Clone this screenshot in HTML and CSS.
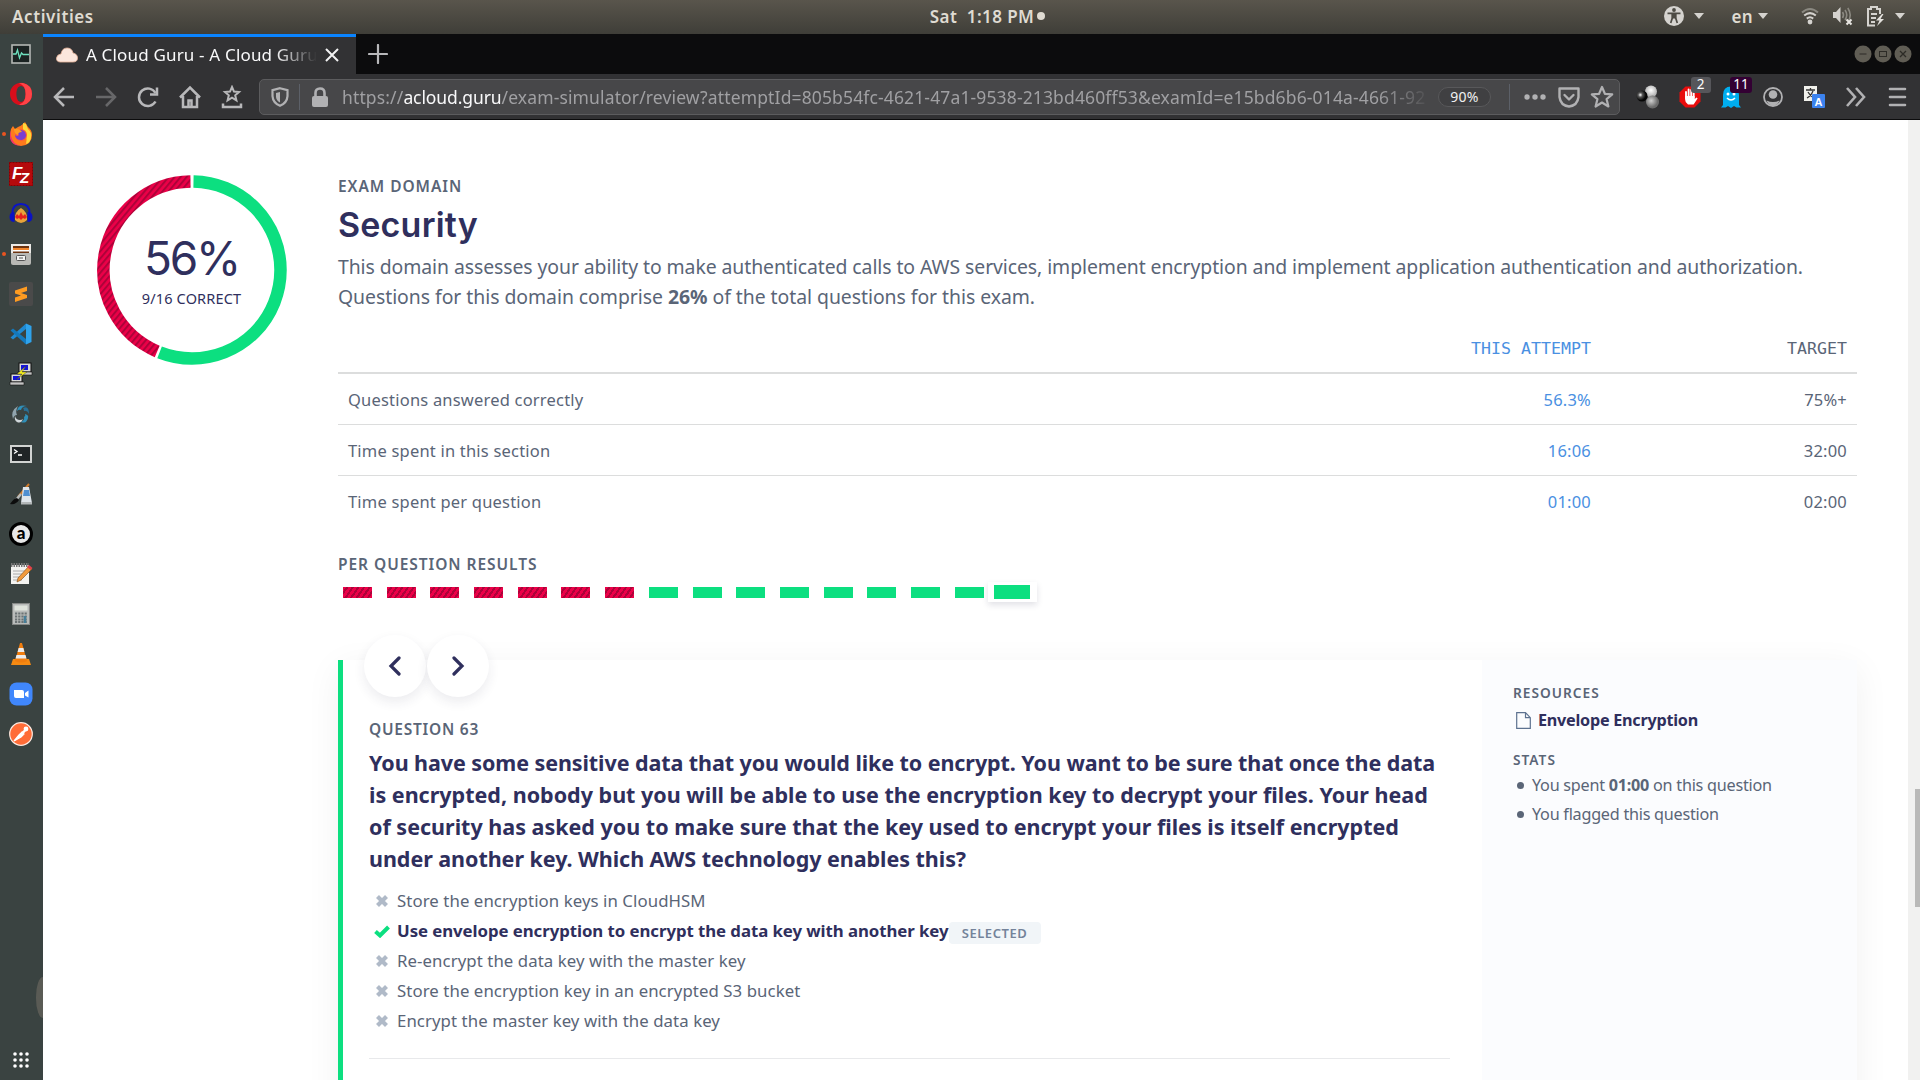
FILE: index.html
```html
<!DOCTYPE html>
<html lang="en">
<head>
<meta charset="utf-8">
<title>A Cloud Guru - A Cloud Guru</title>
<link rel="stylesheet" href="styles.css">
</head>
<body>
<header class="topbar">
  <span class="activities">Activities</span>
  <div class="clock"><span class="clock-text">Sat&nbsp; 1:18 PM</span><i class="clock-dot"></i></div>
  <div class="tray">
    <svg class="t-access" width="22" height="22" viewBox="0 0 22 22"><circle cx="11" cy="11" r="10" fill="#d5d3cf"/><circle cx="11" cy="5" r="1.900" fill="#4d4b44"/><path d="M4.500 8.300h13M9.300 8v5l-1.600 5M12.700 8v5l1.600 5" fill="none" stroke="#4d4b44" stroke-width="1.700"/><path d="M8.800 8h4.400v5.500H8.800z" fill="#4d4b44"/></svg>
    <i class="caret c1"></i>
    <span class="lang">en</span>
    <i class="caret c2"></i>
    <svg class="t-wifi" width="18" height="18" viewBox="0 0 18 18" fill="none" stroke="#d5d3cf" stroke-width="2"><path d="M1 5.500Q9-1.500 17 5.500" stroke="#8b8981"/><path d="M3.200 8.600Q9 3.600 14.800 8.600M5.800 11.600Q9 9 12.200 11.600"/><circle cx="9" cy="15" r="2.400" fill="#d5d3cf" stroke="none"/></svg>
    <svg class="t-vol" width="22" height="20" viewBox="0 0 22 20"><path d="M1 6h3l4.500-5v16L4 12H1z" fill="#d5d3cf"/><path d="M10.500 6q2 3 0 6M13 4q3.500 5 0 10M15.800 2q4.500 7 .5 13" fill="none" stroke="#8b8981" stroke-width="1.600"/><path d="M14.500 13.500l5 5m0-5l-5 5" stroke="#e8e6e2" stroke-width="2"/></svg>
    <svg class="t-bat" width="20" height="22" viewBox="0 0 20 22"><path d="M9 20.500H2V4h3V2h6v2h3v5" fill="none" stroke="#d5d3cf" stroke-width="2"/><path d="M5 9h6M5 13h5M5 17h4" stroke="#d5d3cf" stroke-width="2"/><path d="M16 9l-6 6.500h3.500L11 21l7-7h-3.500l3-5z" fill="#e3e1dd"/></svg>
    <i class="caret c3"></i>
  </div>
</header>
<div class="desktop">
<nav class="dock">
  <svg viewBox="0 0 24 24"><rect x="3" y="3" width="18" height="18" fill="#1b2322" stroke="#b4b7b4" stroke-width="1.600"/><path d="M4 12h3l1.500-4 2 8 2-5 1.500 1.500h6" fill="none" stroke="#6fe3c0" stroke-width="1.300"/></svg>
  <svg viewBox="0 0 24 24"><path fill-rule="evenodd" d="M12 .8c6.200 0 11 5 11 11.200s-4.800 11.200-11 11.200S1 18.200 1 12 5.800.8 12 .8zM12 4c-3 0-4.600 3.600-4.600 8s1.600 8 4.600 8 4.600-3.600 4.600-8S15 4 12 4z" fill="#d80e1b"/><path d="M14 1q9 2 9 11t-9 11q-2 .3-4-.5 6.600-1.500 6.600-10.500T10 1.500q2-.8 4-.5z" fill="#ff4347"/></svg>
  <div class="running"><svg viewBox="0 0 24 24"><path d="M2 7l2-3 2 3 3-2q3-1 5-3l2-2 3 5q4 3 4 8 0 10-11 11Q1 23 1 13z" fill="#ff7a1c"/><path d="M14 1l3 1 2 5q4 3 3 9-1 5-5 6 2-9-3-12z" fill="#ffd83a"/><path d="M2 14q2 9 10 9.500Q5 24 2 19 0 15 2 8z" fill="#f5336b"/><circle cx="12" cy="13" r="6" fill="#ff5a3a"/><path d="M8 10q4-4 8 0 3 6-3 8-7 0-7-5 2 2 4 0z" fill="#7a3fd0"/><path d="M5 7q5-1 8 3-4 0-4 3-4-1-4-6z" fill="#ff9a20"/></svg></div>
  <svg viewBox="0 0 24 24"><rect width="24" height="24" fill="#b40a0c"/><rect x=".5" y=".5" width="23" height="23" fill="none" stroke="#7f0305" stroke-dasharray="2 1"/><text x="3" y="17" class="fz">F</text><text x="11" y="21" class="fz fz-z">Z</text></svg>
  <svg viewBox="0 0 24 24"><path d="M6 18q-1-8 6-12 7 4 6 12-6 6-12 0z" fill="#e9a43a"/><path d="M6 15l2-3 2 2 2-4 2 4 2-2 2 3-2 2-2-1-2 2-2-2-2 1z" fill="#e52320"/><path d="M3.500 14V11q0-9 8.500-9t8.500 9v3" fill="none" stroke="#0a14c8" stroke-width="2"/><path d="M5.500 10v10Q.5 20 .5 15t5-5zM18.500 10v10q5 0 5-5t-5-5z" fill="#0b12c4"/></svg>
  <div class="running"><svg viewBox="0 0 24 24"><rect x="2" y="2" width="20" height="10" fill="#eceae6"/><rect x="4" y="4" width="16" height="8" fill="#6d3410"/><path d="M4 6h16v3H4z" fill="#f1862d"/><path d="M4 8h16v1.500H4z" fill="#fff"/><path d="M2 11h20v10q0 2-2 2H4q-2 0-2-2z" fill="#b9b9b5"/><rect x="7.500" y="13.500" width="9" height="5" rx="1" fill="#f4f4f2" stroke="#555"/><path d="M10 16h4" stroke="#555"/></svg></div>
  <svg viewBox="0 0 24 24"><rect width="24" height="24" rx="2" fill="#4a4a4a"/><path d="M6 8.500L18 4.500V9l-6 2 6 2v3L6 20v-4.500l6-2-6-2z" fill="#ff9b21"/></svg>
  <svg viewBox="0 0 24 24"><path d="M17 1.500V7L4 17.500l-2.500-2z" fill="#1f8ad2"/><path d="M17 22.500V17L4 6.500l-2.500 2z" fill="#1479bd"/><path d="M17 1.500l5.500 2.500v16L17 22.500z" fill="#2fa3ec"/></svg>
  <svg viewBox="0 0 24 24"><rect x="10" y="1" width="12" height="9" fill="#d8d8d8" stroke="#111"/><rect x="12" y="3" width="7" height="5" fill="#1414d8"/><path d="M9 10h14v3H9z" fill="#c4c4c4" stroke="#111" stroke-width=".6"/><rect x="2" y="12" width="11" height="8" fill="#d8d8d8" stroke="#111"/><rect x="4" y="14" width="7" height="4" fill="#1414d8"/><path d="M1 20h14v3H1z" fill="#c4c4c4" stroke="#111" stroke-width=".6"/><path d="M17 4l-9 8h5l-6 6 11-8h-5z" fill="#f6ef1c" stroke="#333" stroke-width=".4"/></svg>
  <svg viewBox="0 0 24 24"><path d="M4 17Q1 9 9 4q-3 5-1 9-3 0-4 4z" fill="#90a4ad"/><path d="M8 9q1-7 10-5-5 0-6 4-2-1-4 1z" fill="#2f8fb8"/><path d="M14 6q6-3 6 6-2-4-5-3 0-2-1-3z" fill="#2a6f95"/><path d="M16 12q6 1 1 8-3 1-5 0 4-2 3-5 2-1 1-3z" fill="#2f8fb8"/><path d="M6 14q1 4 5 4 2 0 3-1-2 5-6 3-3-2-2-6z" fill="#cfd6d9"/></svg>
  <svg viewBox="0 0 24 24"><rect x="2" y="4" width="20" height="16" fill="#202426" stroke="#d2d4d2" stroke-width="2"/><path d="M5 7.500l3 2-3 2M9 13h4" fill="none" stroke="#fff" stroke-width="1.300"/></svg>
  <svg viewBox="0 0 24 24"><path d="M20 2L9 15" stroke="#d07a2a" stroke-width="2"/><path d="M12 12l-5 6" stroke="#b8bcbc" stroke-width="2.500"/><path d="M8 16q-3 0-7 6 6 1 9-4z" fill="#0c0c0c"/><path d="M14 5h6l3 16H12z" fill="#dfe5ea"/><path d="M15 8h5l1 6h-7z" fill="#4f8fd0"/><path d="M12 20h11v2.500H12z" fill="#b3b7b8"/></svg>
  <svg viewBox="0 0 24 24"><circle cx="12" cy="12" r="10.500" fill="#e8e8e8" stroke="#000" stroke-width="3"/><text x="12" y="17" class="a-mark">a</text></svg>
  <svg viewBox="0 0 24 24"><rect x="2" y="3" width="18" height="19" fill="#f3f3f0"/><path d="M2 3h18" stroke="#777" stroke-width="4" stroke-dasharray="1.500 1"/><path d="M4 9h13M4 12h13M4 15h11M4 18h9" stroke="#aaa"/><path d="M20 4l3 3L12 18l-4 2 1-4z" fill="#f09a3c" stroke="#7d4a15" stroke-width=".6"/><path d="M20 3l3.500 3-2 2L18 5z" fill="#e3404a"/></svg>
  <svg viewBox="0 0 24 24"><rect x="3.500" y="1.500" width="17" height="21" fill="#b9bcba" stroke="#858886"/><rect x="5.500" y="3.500" width="13" height="5" fill="#dfe4dc"/><path d="M6 11.500h12M6 14.500h12M6 17.500h12M6 20h12" stroke="#6c7374" stroke-width="1.800" stroke-dasharray="2.200 1"/><path d="M16 14v7" stroke="#477f99" stroke-width="2.500"/></svg>
  <svg viewBox="0 0 24 24"><path d="M4 17h16l2 6H2z" fill="#f58a12"/><path d="M11 1h2l5 18q-6 3-12 0z" fill="#f07d0e"/><path d="M9.600 6h4.800l1 4H8.600zM7.500 13h9l1 3.500H6.500z" fill="#ececec"/></svg>
  <svg viewBox="0 0 24 24"><rect x=".5" y=".5" width="23" height="23" rx="7" fill="#4087fc"/><path d="M5 8h8q2 0 2 2v6H7q-2 0-2-2zM16 11l3.500-2.500v7L16 13.500z" fill="#fff"/></svg>
  <svg viewBox="0 0 24 24"><circle cx="12" cy="12" r="11.300" fill="#ff6c37" stroke="#fde9e0" stroke-width="1.200"/><path d="M5 19l5-6 3-3 2 2-3 3z" fill="#fff" stroke="#fff" stroke-width="1.200"/><path d="M12.500 10l3-2.500 1.500 1.500-2.500 3z" fill="#fff"/><circle cx="17" cy="7" r="2.400" fill="#fff"/></svg>
  <i class="dock-handle"></i>
  <svg class="apps" viewBox="0 0 24 24" fill="#fff"><circle cx="6" cy="6" r="1.800"/><circle cx="12" cy="6" r="1.800"/><circle cx="18" cy="6" r="1.800"/><circle cx="6" cy="12" r="1.800"/><circle cx="12" cy="12" r="1.800"/><circle cx="18" cy="12" r="1.800"/><circle cx="6" cy="18" r="1.800"/><circle cx="12" cy="18" r="1.800"/><circle cx="18" cy="18" r="1.800"/></svg>
</nav>
<div class="browser">
  <div class="tabs">
    <div class="tab">
      <svg class="favicon" width="22" height="16" viewBox="0 0 22 16"><path d="M4 15q-4-.5-3.500-4T5 7Q6 1 11 1t6 5q4.500 1 4.500 5T17 15z" fill="#fbe6dc" stroke="#e9b49a" stroke-width=".8"/></svg>
      <span class="tab-title">A Cloud Guru - A Cloud Guru</span>
      <svg class="tab-close" width="14" height="14" viewBox="0 0 14 14"><path d="M1 1l12 12M13 1L1 13" stroke="#f2f2f3" stroke-width="2"/></svg>
    </div>
    <svg class="newtab" width="20" height="20" viewBox="0 0 20 20"><path d="M10 1v18M1 10h18" stroke="#b8b8ba" stroke-width="2.200" stroke-linecap="round"/></svg>
    <div class="winbtns">
      <svg viewBox="0 0 18 18"><circle cx="9" cy="9" r="8.500" fill="#605d54"/><path d="M5.500 9h7" stroke="#2c2b26"/></svg>
      <svg viewBox="0 0 18 18"><circle cx="9" cy="9" r="8.500" fill="#605d54"/><rect x="5.500" y="6.500" width="7" height="5" fill="none" stroke="#2c2b26"/></svg>
      <svg viewBox="0 0 18 18"><circle cx="9" cy="9" r="8.500" fill="#605d54"/><path d="M6 6l6 6m0-6l-6 6" stroke="#2c2b26" stroke-width="1.300"/></svg>
    </div>
  </div>
  <div class="toolbar">
    <div class="navicons">
      <svg viewBox="0 0 24 24"><path d="M22 12H3M12 3l-9 9 9 9"/></svg>
      <svg class="off" viewBox="0 0 24 24"><path d="M2 12h19M12 3l9 9-9 9"/></svg>
      <svg viewBox="0 0 24 24"><path d="M19.500 16.500A8.800 8.800 0 1 1 19.500 8"/><path d="M21 2.500v7h-7"/></svg>
      <svg viewBox="0 0 24 24"><path d="M2 12.500L12 2.500l10 10M5 11v11h14V11"/><path d="M10.500 22v-6.500h3V22"/></svg>
      <svg viewBox="0 0 24 24"><path d="M12 2l2 4.600 5 .4-3.800 3.300 1.200 5-4.400-2.700-4.400 2.700 1.200-5L5 7l5-.4z" stroke-width="2"/><path d="M3 18.500v3.500h18v-3.500"/></svg>
    </div>
    <div class="urlbar">
      <svg class="u-shield" width="18" height="20" viewBox="0 0 18 20"><path d="M9 1.200l7.500 2v6Q16 16 9 18.800 2 16 1.500 9.200v-6z" fill="none" stroke="#b1b1b3" stroke-width="2.200"/><path d="M9 5l-4 1v4q.4 3.600 4 5.500z" fill="#b1b1b3"/></svg>
      <i class="vsep"></i>
      <svg class="u-lock" width="18" height="20" viewBox="0 0 18 20"><rect x="1" y="9" width="16" height="11" rx="2" fill="#b1b1b3"/><path d="M4.500 10V6q0-4.500 4.500-4.500T13.500 6v4" fill="none" stroke="#b1b1b3" stroke-width="2.600"/></svg>
      <span class="url">https://<b>acloud.guru</b>/exam-simulator/review?attemptId=805b54fc-4621-47a1-9538-213bd460ff53&amp;examId=e15bd6b6-014a-4661-92</span>
      <span class="zoom">90%</span>
      <i class="vsep v2"></i>
      <svg class="u-dots" width="24" height="24" viewBox="0 0 24 24" fill="#b1b1b3"><circle cx="4" cy="12" r="2.700"/><circle cx="12" cy="12" r="2.700"/><circle cx="20" cy="12" r="2.700"/></svg>
      <svg class="u-pocket" width="24" height="24" viewBox="0 0 24 24" fill="none" stroke="#b1b1b3" stroke-width="2.400" stroke-linejoin="round" stroke-linecap="round"><path d="M2.500 3.500h19V12q-1 8.500-9.500 9.500Q3.500 20.500 2.500 12z"/><path d="M7.500 10l4.500 4.500L16.500 10"/></svg>
      <svg class="u-star" width="24" height="24" viewBox="0 0 24 24" fill="none" stroke="#b1b1b3" stroke-width="2.200" stroke-linejoin="round"><path d="M12 2l2.900 6.800 7.300.6-5.600 4.800 1.800 7.300L12 17.500l-6.400 4 1.800-7.300-5.600-4.800 7.300-.6z"/></svg>
    </div>
    <div class="exts">
      <svg viewBox="0 0 24 24"><defs><radialGradient id="g1" cx=".35" cy=".4"><stop offset="0" stop-color="#fff"/><stop offset=".4" stop-color="#555"/><stop offset="1" stop-color="#050505"/></radialGradient><radialGradient id="g2" cx=".5" cy=".4"><stop offset="0" stop-color="#fff"/><stop offset="1" stop-color="#b5b5b5"/></radialGradient><radialGradient id="g3" cx=".4" cy=".4"><stop offset="0" stop-color="#d0d0d0"/><stop offset="1" stop-color="#6b6b6b"/></radialGradient></defs><circle cx="15" cy="6.500" r="6" fill="url(#g2)"/><circle cx="6" cy="11" r="5.500" fill="url(#g1)"/><circle cx="16.500" cy="17" r="6.500" fill="url(#g3)"/></svg>
      <div class="ext"><svg viewBox="0 0 24 24"><path d="M7.500 1.500h9l6 6v9l-6 6h-9l-6-6v-9z" fill="#e80c0c"/><path d="M8 7v6M10.600 4.500V12M13.200 5v7M15.700 7v6" stroke="#fff" stroke-width="1.900" stroke-linecap="round"/><path d="M7.100 11h9.500v3l2-1.500 1 1-4 6H10q-3-2-2.900-5z" fill="#fff"/></svg><span class="badge">2</span></div>
      <div class="ext"><svg viewBox="0 0 24 24"><path d="M4 20V10q0-8.500 8-8.500T20 10v10l2 2.500h-4.500L15 21l-3 2-3-2-2.500 1.500H2z" fill="#00aef0"/><circle cx="9" cy="9" r="1.500" fill="#fff"/><circle cx="15" cy="9" r="1.500" fill="#fff"/><path d="M8 13q4 4 8 0" fill="none" stroke="#fff" stroke-width="1.600"/></svg><span class="badge purple">11</span></div>
      <svg viewBox="0 0 24 24"><circle cx="12" cy="12" r="9" fill="none" stroke="#b1b1b3" stroke-width="1.800"/><circle cx="12" cy="9.500" r="4.300" fill="#b1b1b3"/><path d="M5.500 15.500q6.500 3 13 0-2 5-6.500 5t-6.500-5z" fill="#b1b1b3"/></svg>
      <svg viewBox="0 0 24 24"><rect x="2" y="1" width="13" height="15" fill="#f1f1ec"/><path d="M4 5h9M8.500 3v2M11 6q-2 5-6 7M6 7q2 4 6 6" fill="none" stroke="#333" stroke-width="1.300"/><rect x="10" y="9" width="13" height="14" rx="1" fill="#3b82ee"/><text x="16.500" y="20.500" class="tr">A</text></svg>
      <svg viewBox="0 0 24 24" fill="none" stroke="#b1b1b3" stroke-width="2.600"><path d="M3 3l8 9-8 9M12 3l8 9-8 9"/></svg>
      <svg viewBox="0 0 24 24" stroke="#b1b1b3" stroke-width="2.600" stroke-linecap="round"><path d="M5 4h15M5 12h15M5 20h15"/></svg>
    </div>
  </div>
  <div class="viewport">
    <main class="page">
      <aside class="score">
        <div class="donut">
          <svg width="190" height="190" viewBox="0 0 190 190">
            <defs><pattern id="stripes" width="4.600" height="4.600" patternUnits="userSpaceOnUse" patternTransform="rotate(40)"><rect width="4.600" height="4.600" fill="#ec0048"/><rect width="2" height="4.600" fill="#ad0339"/></pattern></defs>
            <g fill="none" stroke-width="12.500" transform="rotate(-90 95 95)"><circle cx="95" cy="95" r="88.500" stroke="#0cdf80" pathLength="360" stroke-dasharray="200.500 159.500" stroke-dashoffset="-1"/></g>
            <path d="M60.200 176.400A88.500 88.500 0 0 1 93.500 6.500" fill="none" stroke="url(#stripes)" stroke-width="12.500"/>
          </svg>
          <div class="donut-label"><span class="pct">56%</span><span class="frac">9/16 CORRECT</span></div>
        </div>
      </aside>
      <section class="domain">
        <h4 class="eyebrow">EXAM DOMAIN</h4>
        <h1 class="title">Security</h1>
        <p class="desc"><span>This domain assesses your ability to make authenticated calls to AWS services, implement encryption and implement application authentication and authorization.</span><br><span class="desc-2">Questions for this domain comprise <b>26%</b> of the total questions for this exam.</span></p>
        <div class="stats">
          <div class="row head"><span></span><span class="blue">THIS ATTEMPT</span><span>TARGET</span></div>
          <div class="row"><span>Questions answered correctly</span><span class="blue">56.3%</span><span>75%+</span></div>
          <div class="row"><span>Time spent in this section</span><span class="blue">16:06</span><span>32:00</span></div>
          <div class="row"><span>Time spent per question</span><span class="blue">01:00</span><span>02:00</span></div>
        </div>
        <h4 class="eyebrow results">PER QUESTION RESULTS</h4>
        <div class="bars"><i class="bad"></i><i class="bad"></i><i class="bad"></i><i class="bad"></i><i class="bad"></i><i class="bad"></i><i class="bad"></i><i></i><i></i><i></i><i></i><i></i><i></i><i></i><i></i><i class="current"></i></div>
        <article class="card">
          <div class="arrows">
            <button><svg width="14" height="20" viewBox="0 0 14 20"><path d="M11 2L3 10l8 8" fill="none" stroke="#2f2f5d" stroke-width="3.200" stroke-linecap="round"/></svg></button>
            <button><svg width="14" height="20" viewBox="0 0 14 20"><path d="M3 2l8 8-8 8" fill="none" stroke="#2f2f5d" stroke-width="3.200" stroke-linecap="round"/></svg></button>
          </div>
          <div class="body">
            <h4 class="eyebrow qnum">QUESTION 63</h4>
            <h2 class="question"><span class="q-1">You have some sensitive data that you would like to encrypt. You want to be sure that once the data</span><br><span>is encrypted, nobody but you will be able to use the encryption key to decrypt your files. Your head</span><br><span>of security has asked you to make sure that the key used to encrypt your files is itself encrypted</span><br><span class="q-4">under another key. Which AWS technology enables this?</span></h2>
            <ul class="answers">
              <li><svg viewBox="0 0 14 14"><path d="M2.500 2.500l9 9m0-9l-9 9"/></svg><span>Store the encryption keys in CloudHSM</span></li>
              <li class="right"><svg viewBox="0 0 16 14"><path d="M1.500 7.500L6 11.500 14.500 3"/></svg><span>Use envelope encryption to encrypt the data key with another key</span><em>SELECTED</em></li>
              <li><svg viewBox="0 0 14 14"><path d="M2.500 2.500l9 9m0-9l-9 9"/></svg><span>Re-encrypt the data key with the master key</span></li>
              <li><svg viewBox="0 0 14 14"><path d="M2.500 2.500l9 9m0-9l-9 9"/></svg><span>Store the encryption key in an encrypted S3 bucket</span></li>
              <li><svg viewBox="0 0 14 14"><path d="M2.500 2.500l9 9m0-9l-9 9"/></svg><span>Encrypt the master key with the data key</span></li>
            </ul>
            <hr>
          </div>
          <aside class="side">
            <h5>RESOURCES</h5>
            <a class="resource"><svg width="15" height="17" viewBox="0 0 15 17"><path d="M.7.700h8.800l4.800 5v10.600H.7zM9.500.700v5h4.800" fill="none" stroke="#5d7290" stroke-width="1.200"/></svg><span>Envelope Encryption</span></a>
            <h5 class="stats-h">STATS</h5>
            <ul class="facts"><li><span>You spent <b>01:00</b> on this question</span></li><li><span>You flagged this question</span></li></ul>
          </aside>
        </article>
      </section>
    </main>
    <div class="scrollbar"><i></i></div>
  </div>
</div>
</div>
</body>
</html>
```
FILE: styles.css
```css
*{box-sizing:border-box}
body{margin:0;width:1920px;height:1080px;overflow:hidden;background:#fff;font-family:"Noto Sans","Open Sans",sans-serif;color:#5a6577;display:flex;flex-direction:column}
svg{display:block;flex:none}
h1,h2,h4,h5,p,ul{margin:0;padding:0}
ul{list-style:none}
i,em{font-style:normal}
span{white-space:nowrap}
.topbar{height:34px;flex:none;display:grid;grid-template-columns:1fr auto 1fr;align-items:center;padding:0 12px 2px;background:linear-gradient(#59554c,#3f3e38);color:#dfdbd2;font-size:17px;font-weight:600;letter-spacing:.4px}
.activities{letter-spacing:.6px}
.clock{display:flex;align-items:center;gap:3px;margin-left:55px}
.clock-dot{width:8px;height:8px;border-radius:50%;background:#dfdbd2}
.tray{display:flex;align-items:center;justify-content:flex-end}
.caret{border:5px solid transparent;border-top:6px solid #d5d3cf;border-bottom:0}
.c1{margin:0 27px 0 9px}
.c2{margin:0 33px 0 5px}
.t-vol{margin:0 12px 0 13px}
.c3{margin-left:9px;margin-right:3px}
.desktop{flex:1;display:flex;min-height:0}
.dock{width:43px;flex:none;background:#3a4341;display:flex;flex-direction:column;align-items:center;gap:16px;padding:8px 1px 0 0;position:relative}
.dock svg{width:24px;height:24px}
.running{position:relative}
.running::before{content:"";position:absolute;left:-7px;top:10px;width:4px;height:4px;border-radius:50%;background:#e95420}
.fz{font:italic 700 17px "Liberation Sans",sans-serif;fill:#fff}
.fz-z{font-size:15px}
.a-mark{font:900 17px Lato,sans-serif;text-anchor:middle;fill:#000}
.dock-handle{position:absolute;right:0;top:943px;width:7px;height:41px;border-radius:7px 0 0 7px/20px 0 0 20px;background:#5a5b55}
.dock .apps{margin-top:auto;margin-bottom:8px}
.browser{flex:1;display:flex;flex-direction:column;min-width:0}
.tabs{height:40px;flex:none;background:#0c0c0d;display:flex;align-items:center}
.tab{width:313px;height:40px;background:#323234;border-top:3px solid #0a84ff;display:flex;align-items:center;padding:0 17px 1px 13px;color:#f9f9fa;font-size:17px;letter-spacing:.17px}
.tab-title{width:231px;margin:-2px 8px 0;overflow:hidden;-webkit-mask-image:linear-gradient(90deg,#000 82%,transparent)}
.newtab{margin-left:12px}
.winbtns{margin-left:auto;display:flex;gap:2px;margin-right:8px}
.winbtns svg{width:18px;height:18px}
.toolbar{height:46px;flex:none;background:#323234;border-bottom:1px solid #0c0c0d;display:flex;align-items:center}
.navicons{display:flex;gap:18px;margin-left:9px;width:207px;fill:none;stroke:#b8b8ba;stroke-width:2.500}
.navicons svg{width:24px;height:24px}
.off{opacity:.4}
.urlbar{width:1361px;height:36px;background:#474749;border:1px solid #5c5c5e;border-radius:5px;display:flex;align-items:center;padding-left:11px;color:#a0a0a3;font-size:17.500px;letter-spacing:.137px}
.vsep{width:1px;height:26px;background:#5c6068;margin:0 11px 0 10px}
.url{width:1090px;margin-left:13px;overflow:hidden;-webkit-mask-image:linear-gradient(90deg,#000 95%,transparent)}
.url b{font-weight:400;color:#f9f9fa;letter-spacing:-.1px}
.zoom{width:53px;height:20px;border-radius:10px;border:1px solid #58585a;background:#404042;color:#f0f0f1;font-size:14px;letter-spacing:.3px;display:flex;align-items:center;justify-content:center;margin-left:6px}
.v2{margin:0 13px 0 18px}
.u-pocket{margin-left:10px}
.u-star{margin-left:9px}
.exts{display:flex;gap:17.500px;margin-left:16px}
.exts svg{width:24px;height:24px}
.ext{position:relative}
.badge{position:absolute;left:13px;top:-8px;width:20px;height:16px;border-radius:3px;background:#56565a;color:#fff;font-size:13.500px;line-height:15px;text-align:center}
.purple{left:11px;width:22px;background:#330033}
.tr{font:700 11px "Liberation Sans",sans-serif;fill:#fff;text-anchor:middle}
.viewport{flex:1;display:flex;min-height:0;overflow:hidden}
.page{flex:1;display:flex;padding:54px 51px 0 53px}
.scrollbar{width:12px;background:#f1f1f0;padding:669px 0 0 7px}
.scrollbar i{display:block;height:118px;background:#b9b9b8}
.score{width:242px;flex:none;padding:1px 0 0 .5px}
.donut{width:190px;height:190px;display:grid}
.donut>*{grid-area:1/1}
.donut-label{display:flex;flex-direction:column;align-items:center;color:#2f2f5d;padding-top:55px}
.pct{font:400 46px/56px Inter,sans-serif;letter-spacing:-2.200px}
.frac{font-size:14.500px;line-height:20px;letter-spacing:.16px;margin-top:2px}
.domain{width:1519px;flex:none}
.eyebrow{font-size:15.500px;line-height:24px;font-weight:600;letter-spacing:.95px}
.title{font:600 34px/44px Inter,sans-serif;color:#2f2f5d;margin-top:5px;letter-spacing:.2px}
.desc{font-size:19.400px;line-height:30px;margin-top:5px;letter-spacing:-.072px}
.desc-2{letter-spacing:-.039px}
.stats{margin-top:24px;font-size:16.500px;letter-spacing:.2px}
.row{display:grid;grid-template-columns:1fr 260px 256px;height:51px;align-items:center;padding:0 10px;border-bottom:1px solid #dcdddd}
.row>:nth-child(n+2){text-align:right}
.row:last-child{border:0}
.head{height:38px;line-height:26px;align-items:start;border-bottom:2px solid #dcdddd;font-family:"DejaVu Sans Mono",monospace;font-size:16.600px;letter-spacing:0}
.blue{color:#4a90e2}
.results{margin-top:25px}
.bars{display:flex;height:20px;align-items:center;margin-top:6px;padding-left:5px;gap:14.700px}
.bars i{width:29px;height:11px;background:#0cdf80}
.bars .bad{background:repeating-linear-gradient(125deg,#ec0048 0 2.600px,#ad0339 2.600px 4.600px)}
.bars .current{width:49px;height:20px;border:solid #fff;border-width:3px 7px 3px 6px;margin-left:-10px;box-shadow:0 3px 6px rgba(40,40,80,.14)}
.card{margin-top:58px;height:460px;border-left:5px solid #0cdf80;background:#fff;box-shadow:0 8px 34px rgba(0,0,0,.06);display:flex;position:relative}
.arrows{position:absolute;left:20.500px;top:-25px;display:flex;gap:1px}
.arrows button{width:62px;height:62px;border:0;border-radius:50%;background:#fff;box-shadow:0 5px 12px rgba(40,40,80,.09);display:flex;align-items:center;justify-content:center}
.body{width:1139px;padding:57px 32px 0 26px}
.qnum{letter-spacing:.75px}
.question{font-size:21.500px;line-height:32px;font-weight:700;color:#2f2f5d;margin-top:6px}
.q-1{letter-spacing:-.08px}
.q-4{letter-spacing:-.05px}
.answers{margin-top:11px;font-size:16.800px;line-height:30px;letter-spacing:.075px}
.answers li{display:flex;align-items:center;height:30px;padding-left:6px}
.answers svg{width:14px;height:14px;margin-right:8px;stroke:#b0bac8;stroke-width:4.200;fill:none}
.answers .right{color:#2f2f5d;font-weight:700;padding-left:5px;letter-spacing:-.054px}
.answers .right svg{width:16px;margin-right:7px;stroke:#0cdf80;stroke-width:4}
em{height:22px;line-height:22px;width:92px;text-align:center;border-radius:4px;background:#f1f5f8;color:#74839a;font-size:13px;font-weight:600;letter-spacing:.55px;margin-top:3px}
hr{border:0;border-top:1px solid #e8e9eb;margin:22px 0 0}
.side{flex:1;background:#fbfcfe;padding:22px 0 0 31px}
h5{font-size:13.700px;line-height:22px;font-weight:600;letter-spacing:1px}
.resource{display:flex;align-items:center;gap:7px;padding-left:3px;height:28px;margin-top:2px;color:#2f2f5d;font-weight:700;font-size:16.200px;letter-spacing:-.25px}
.stats-h{margin-top:15px}
.facts{font-size:16.200px;line-height:29px;letter-spacing:-.25px}
.facts li{display:flex;align-items:center;gap:8px;padding-left:4px}
.facts li::before{content:"";width:7px;height:7px;border-radius:50%;background:#5a6577}
```
